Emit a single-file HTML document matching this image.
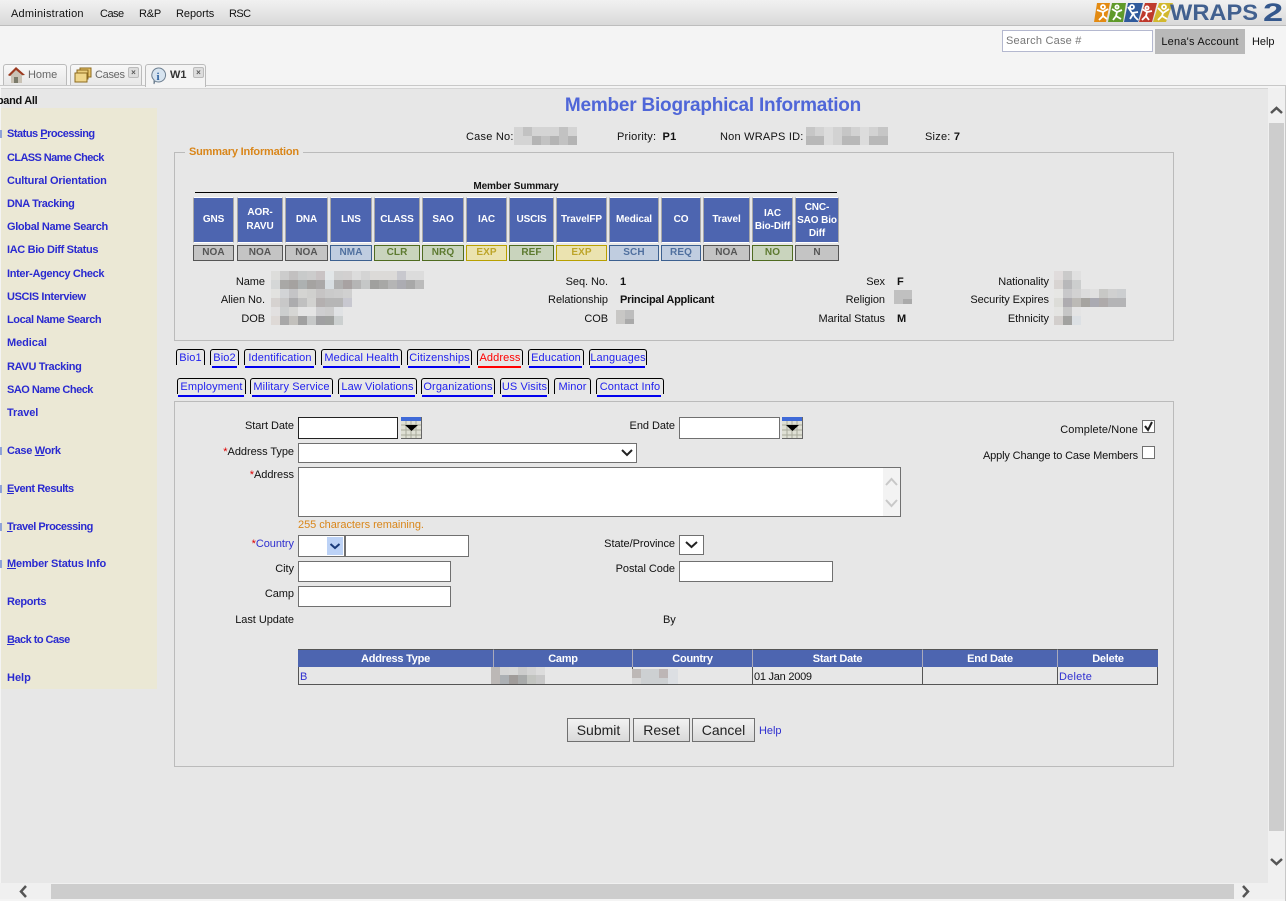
<!DOCTYPE html>
<html><head><meta charset="utf-8"><title>Member Biographical Information</title>
<style>
html,body{margin:0;padding:0;width:1286px;height:901px;overflow:hidden;background:#f4f4f4}
body{position:relative;font:11px/14px "Liberation Sans",sans-serif;color:#111;letter-spacing:-.05px}
div,span.a,svg.a,a{position:absolute}
.t{white-space:nowrap;height:16px;line-height:16px}
.p{letter-spacing:.22px}
.r{white-space:nowrap;height:16px;line-height:16px;text-align:right;width:200px}
.nav{left:7px;margin-top:1px;font-weight:bold;color:#2a2ad0;white-space:nowrap;height:16px;line-height:16px;text-decoration:none;letter-spacing:-.35px}
.h{background:#4d65b0;color:#fff;font-weight:bold;font-size:10px;line-height:14px;text-align:center;top:197px;height:46px;border-left:1px solid #a8a8a8;border-right:1px solid #a8a8a8;border-top:1px solid #fff;border-bottom:1px solid #fff;box-sizing:border-box;display:flex;align-items:center;justify-content:center;letter-spacing:-.1px;white-space:nowrap}
.s{top:245px;height:16px;box-sizing:border-box;border:1px solid #555;background:#c4c4c4;color:#555;font-weight:bold;font-size:10px;line-height:14px;text-align:center;letter-spacing:.1px}
.bl{border-color:#3c6090;background:#c0cde0;color:#50709f}
.gr{border-color:#4f6b20;background:#c9d4bd;color:#5d7a30}
.ye{border-color:#b8a000;background:#ebe3b0;color:#bda52a}
.v{font-weight:bold;letter-spacing:-.27px}
.tab{height:16px;box-sizing:border-box;border:1px solid #000;border-bottom:0;border-radius:3px 3px 0 0;color:#2222ee;text-align:center;line-height:16px;white-space:nowrap;letter-spacing:.1px}
.u{height:2px;background:#0000ee}
.in{background:#fff;border:1px solid #707070;box-sizing:border-box}
.th{top:649px;height:18px;background:#4d65b0;color:#fff;font-weight:bold;text-align:center;line-height:18px;box-sizing:border-box;border-top:1px solid #555;border-right:1px solid #aab;letter-spacing:-.25px}
.td{top:667px;height:18px;box-sizing:border-box;border-bottom:1px solid #555;border-right:1px solid #555;line-height:18px;white-space:nowrap;padding:1px 0 0 1px;letter-spacing:.22px}
.btn{top:718px;height:24px;box-sizing:border-box;border:1px solid #707070;background:linear-gradient(#f2f2f2,#d9d9d9);font-size:14px;line-height:22px;text-align:center;color:#222;letter-spacing:0}
.tb{top:64px;height:22px;box-sizing:border-box;border:1px solid #bbb;border-bottom:0;border-radius:3px 3px 0 0;background:linear-gradient(#f8f8f8,#e6e6e6);color:#666;line-height:20px}
.x{top:2px;width:9px;height:9px;background:#ddd;border:1px solid #bbb;border-radius:2px;font-size:8px;line-height:9px;text-align:center;color:#555;font-weight:bold;letter-spacing:0}
.m{left:0;width:2px;height:8px;background:#8fa2d8}
</style></head><body>

<!-- top bar -->
<div style="left:0;top:0;width:1286px;height:25px;background:linear-gradient(#f1f1f1,#d9d9d9);border-bottom:1px solid #bdbdbd"></div>
<div class="t p" style="left:11px;top:6px">Administration</div>
<div class="t" style="left:100px;top:6px;letter-spacing:-.5px">Case</div>
<div class="t" style="left:139px;top:6px;letter-spacing:-.2px">R&amp;P</div>
<div class="t" style="left:176px;top:6px">Reports</div>
<div class="t" style="left:229px;top:6px;letter-spacing:-.6px">RSC</div>

<!-- logo -->
<svg class="a" style="left:1092px;top:2px" width="194" height="22" viewBox="0 0 194 22">
<polygon points="5,1 18,1 14,20 2,20" fill="#e38a12"/>
<polygon points="20,1 34,1 31,20 16,20" fill="#5f9a2a"/>
<polygon points="36,1 51,1 46,20 32,20" fill="#2f5a9c"/>
<polygon points="53,1 65,1 60,20 47,20" fill="#bf3a2c"/>
<polygon points="67,1 81,1 74,20 61,20" fill="#d2b82e"/>
<g stroke="#fff" stroke-width="1.8" fill="none">
<circle cx="11" cy="5" r="2"/><path d="M5 8l6 2 5-3M11 10v4l-4 4M11 14l4 3"/>
<circle cx="25" cy="5" r="1.6"/><path d="M20 7l5 3 5-2M25 10l-1 4-3 4M24 14l5 3"/>
<circle cx="40" cy="5" r="2"/><path d="M36 5l4 6 6-1M41 11l2 4 3 3M41 12l-3 5"/>
<circle cx="55" cy="6" r="1.6"/><path d="M50 7l5 3 5-1M55 10l-1 4-4 4M54 14l3 4"/>
<circle cx="72" cy="5" r="2"/><path d="M66 6l5 5 6-4M71 11l-1 3-4 4M70 14l5 3"/>
</g>
<text x="78" y="18" font-family="Liberation Sans" font-weight="bold" font-size="22" fill="#41608f" textLength="88" lengthAdjust="spacingAndGlyphs" letter-spacing="0">WRAPS</text>
<text x="171" y="19" font-family="Liberation Sans" font-weight="bold" font-size="25" fill="#34578c" letter-spacing="0" transform="translate(171 0) scale(1.45 1) translate(-171 0)">2</text>
</svg>

<!-- search row -->
<div class="p" style="left:1002px;top:30px;width:151px;height:22px;box-sizing:border-box;background:#fff;border:1px solid #b4b8cf;color:#777;line-height:21px;padding-left:3px">Search Case #</div>
<div class="p" style="left:1155px;top:29px;width:90px;height:25px;background:#b9b9b9;text-align:center;line-height:26px">Lena's Account</div>
<div class="t" style="left:1252px;top:34px">Help</div>

<!-- tabs -->
<div class="tb" style="left:3px;width:64px"><span class="a" style="left:24px;top:0">Home</span>
<svg class="a" style="left:3px;top:2px" width="18" height="17"><polygon points="9,1 18,8 15,9 15,16 4,16 4,9 1,9" fill="#c9c2b5"/><polygon points="9,0 18,8 15,8 9,3 3,9 1,8" fill="#9c3a20"/><rect x="7" y="10" width="4" height="6" fill="#7a7a6a"/></svg></div>
<div class="tb" style="left:70px;width:72px"><span class="a" style="left:24px;top:0;letter-spacing:-.3px">Cases</span>
<svg class="a" style="left:3px;top:2px" width="18" height="16"><rect x="6" y="1" width="11" height="9" fill="#e8c46a" stroke="#8c6a20"/><rect x="3" y="3" width="11" height="9" fill="#eccf7e" stroke="#8c6a20"/><rect x="1" y="6" width="12" height="9" fill="#f0d68a" stroke="#8c6a20"/></svg>
<div class="x" style="left:57px">×</div></div>
<div class="tb" style="left:145px;width:61px;background:#f4f4f4;height:23px;color:#333;font-weight:bold;z-index:3"><span class="a" style="left:24px;top:0">W1</span>
<svg class="a" style="left:3px;top:2px" width="18" height="18"><path d="M9 1a7 7 0 1 1-3 13l-1 3 0-4a7 7 0 0 1 4-12z" fill="#d7e4f0" stroke="#6d7f90"/><text x="9" y="13" font-size="11" font-weight="bold" font-family="Liberation Serif" text-anchor="middle" fill="#2a5f9e">i</text></svg>
<div class="x" style="left:47px">×</div></div>
<div style="left:0;top:85px;width:1286px;height:1px;background:#c8c8c8"></div>

<!-- content -->
<div style="left:1px;top:88px;width:1267px;height:795px;background:#e7e7e7;border-top:1px solid #d4d4d4;box-sizing:border-box"></div>
<div style="left:1268px;top:88px;width:17px;height:795px;background:#f0f0f0"></div>
<div style="left:1269px;top:123px;width:15px;height:708px;background:#cdcdcd"></div>
<div style="left:0;top:883px;width:1285px;height:16px;background:#f0f0f0"></div>
<div style="left:51px;top:884px;width:1183px;height:15px;background:#cdcdcd"></div>
<div style="left:1285px;top:85px;width:1px;height:816px;background:#c8c8c8"></div>
<svg class="a" style="left:1268px;top:100px" width="17" height="20"><path d="M3 13l5.500-5 5.500 5" fill="none" stroke="#555" stroke-width="2.500"/></svg>
<svg class="a" style="left:1268px;top:852px" width="17" height="20"><path d="M3 7l5.500 5 5.500-5" fill="none" stroke="#555" stroke-width="2.500"/></svg>
<svg class="a" style="left:14px;top:884px" width="20" height="15"><path d="M12 2l-5 5.500 5 5.500" fill="none" stroke="#555" stroke-width="2.500"/></svg>
<svg class="a" style="left:1238px;top:884px" width="20" height="15"><path d="M5 2l5 5.500-5 5.500" fill="none" stroke="#555" stroke-width="2.500"/></svg>

<!-- sidebar -->
<div class="t" style="left:0;top:93px;width:60px;overflow:hidden;font-weight:bold;color:#111;letter-spacing:-.3px"><span style="margin-left:-16px">Expand All</span></div>
<div style="left:1px;top:108px;width:156px;height:581px;background:#ebe8d5"></div>
<div class="m" style="top:130px"></div><div class="m" style="top:447px"></div><div class="m" style="top:485px"></div><div class="m" style="top:523px"></div><div class="m" style="top:560px"></div>
<div class="nav" style="top:125px;letter-spacing:-.49px">Status <u>P</u>rocessing</div>
<div class="nav" style="top:149px;letter-spacing:-.6px">CLASS Name Check</div>
<div class="nav" style="top:172px;letter-spacing:-.18px">Cultural Orientation</div>
<div class="nav" style="top:195px">DNA Tracking</div>
<div class="nav" style="top:218px;letter-spacing:-.34px">Global Name Search</div>
<div class="nav" style="top:241px">IAC Bio Diff Status</div>
<div class="nav" style="top:265px;letter-spacing:-.34px">Inter-Agency Check</div>
<div class="nav" style="top:288px;letter-spacing:-.38px">USCIS Interview</div>
<div class="nav" style="top:311px;letter-spacing:-.43px">Local Name Search</div>
<div class="nav" style="top:334px;letter-spacing:-.07px">Medical</div>
<div class="nav" style="top:358px;letter-spacing:-.32px">RAVU Tracking</div>
<div class="nav" style="top:381px;letter-spacing:-.5px">SAO Name Check</div>
<div class="nav" style="top:404px;letter-spacing:-.1px">Travel</div>
<div class="nav" style="top:442px;letter-spacing:-.33px">Case <u>W</u>ork</div>
<div class="nav" style="top:480px;letter-spacing:-.47px"><u>E</u>vent Results</div>
<div class="nav" style="top:518px;letter-spacing:-.49px"><u>T</u>ravel Processing</div>
<div class="nav" style="top:555px;letter-spacing:-.17px"><u>M</u>ember Status Info</div>
<div class="nav" style="top:593px">Reports</div>
<div class="nav" style="top:631px;letter-spacing:-.53px"><u>B</u>ack to Case</div>
<div class="nav" style="top:669px;letter-spacing:0">Help</div>

<!-- title -->
<div style="left:413px;top:94px;width:600px;text-align:center;font-weight:bold;font-size:19px;line-height:23px;color:#4f66d8;letter-spacing:-.22px">Member Biographical Information</div>
<div class="t p" style="left:466px;top:129px">Case No:</div>
<svg class="a" style="left:514px;top:127px" width="63" height="18"><path fill="#d4d4d4" d="M0 0h63v18H0z"/><path fill="#c2c2c2" d="M9 0h9v9H9zM27 9h9v9h-9zM45 0h9v18h-9z"/><path fill="#b4b4b4" d="M18 9h9v9h-9zM36 9h9v9h-9zM54 9h9v9h-9z"/></svg>
<div class="t p" style="left:617px;top:129px">Priority: <b style="margin-left:3px">P1</b></div>
<div class="t p" style="left:720px;top:129px">Non WRAPS ID:</div>
<svg class="a" style="left:806px;top:127px" width="82" height="18"><path fill="#d2d2d2" d="M0 0h82v18H0z"/><path fill="#b8b8b8" d="M0 9h18v9H0zM36 9h18v9H36zM63 9h19v9H63z"/><path fill="#dcdcdc" d="M18 0h9v18h-9zM54 0h9v18h-9z"/><path fill="#c6c6c6" d="M0 0h9v9H0zM36 0h9v9h-9zM72 0h10v9H72z"/></svg>
<div class="t p" style="left:925px;top:129px">Size: <b>7</b></div>

<!-- summary -->
<div style="left:174px;top:152px;width:1000px;height:189px;box-sizing:border-box;border:1px solid #bbb"></div>
<div class="t" style="left:185px;top:144px;padding:0 4px;background:#e7e7e7;color:#d9861a;font-weight:bold;letter-spacing:-.2px">Summary Information</div>
<div class="t" style="left:416px;top:179px;width:200px;text-align:center;font-weight:bold;font-size:10px;letter-spacing:-.1px">Member Summary</div>
<div style="left:195px;top:192px;width:642px;height:1px;background:#000"></div>

<div class="h" style="left:193px;width:41px">GNS</div><div class="s" style="left:193px;width:41px">NOA</div>
<div class="h" style="left:237px;width:46px">AOR-<br>RAVU</div><div class="s" style="left:237px;width:46px">NOA</div>
<div class="h" style="left:285px;width:43px">DNA</div><div class="s" style="left:285px;width:43px">NOA</div>
<div class="h" style="left:330px;width:42px">LNS</div><div class="s bl" style="left:330px;width:42px">NMA</div>
<div class="h" style="left:374px;width:46px">CLASS</div><div class="s gr" style="left:374px;width:46px">CLR</div>
<div class="h" style="left:422px;width:42px">SAO</div><div class="s gr" style="left:422px;width:42px">NRQ</div>
<div class="h" style="left:466px;width:41px">IAC</div><div class="s ye" style="left:466px;width:41px">EXP</div>
<div class="h" style="left:509px;width:45px">USCIS</div><div class="s gr" style="left:509px;width:45px">REF</div>
<div class="h" style="left:556px;width:51px">TravelFP</div><div class="s ye" style="left:556px;width:51px">EXP</div>
<div class="h" style="left:609px;width:50px">Medical</div><div class="s bl" style="left:609px;width:50px">SCH</div>
<div class="h" style="left:661px;width:40px">CO</div><div class="s bl" style="left:661px;width:40px">REQ</div>
<div class="h" style="left:703px;width:47px">Travel</div><div class="s" style="left:703px;width:47px">NOA</div>
<div class="h" style="left:752px;width:41px;line-height:13px">IAC<br>Bio-Diff</div><div class="s gr" style="left:752px;width:41px">NO</div>
<div class="h" style="left:795px;width:44px;line-height:13px">CNC-<br>SAO Bio<br>Diff</div><div class="s" style="left:795px;width:44px">N</div>

<div class="r" style="left:65px;top:274px">Name</div>
<div class="r" style="left:65px;top:292px">Alien No.</div>
<div class="r" style="left:65px;top:311px">DOB</div>
<svg class="a" style="left:271px;top:271px" width="153" height="54" shape-rendering="crispEdges">
<rect x="0" y="0" width="9" height="9" fill="#dddddb"/><rect x="9" y="0" width="9" height="9" fill="#cccccc"/><rect x="18" y="0" width="9" height="9" fill="#c2c0c0"/><rect x="27" y="0" width="9" height="9" fill="#c8caca"/><rect x="36" y="0" width="9" height="9" fill="#cccccc"/><rect x="45" y="0" width="9" height="9" fill="#c9c3c4"/><rect x="54" y="0" width="9" height="9" fill="#e2e6e8"/><rect x="63" y="0" width="9" height="9" fill="#d0d0d0"/><rect x="72" y="0" width="9" height="9" fill="#d2d0d0"/><rect x="81" y="0" width="9" height="9" fill="#dcdcdc"/><rect x="90" y="0" width="9" height="9" fill="#d4d4d4"/><rect x="99" y="0" width="27" height="9" fill="#dcdad8"/><rect x="126" y="0" width="9" height="9" fill="#c8c8ce"/><rect x="135" y="0" width="18" height="9" fill="#dcdcdc"/>
<rect x="0" y="9" width="9" height="9" fill="#d5d7d7"/><rect x="9" y="9" width="9" height="9" fill="#a9a8a6"/><rect x="18" y="9" width="9" height="9" fill="#a5a2a0"/><rect x="27" y="9" width="9" height="9" fill="#adb1b1"/><rect x="36" y="9" width="9" height="9" fill="#a5a3a1"/><rect x="45" y="9" width="9" height="9" fill="#aaa8a8"/><rect x="54" y="9" width="9" height="9" fill="#d8dee2"/><rect x="63" y="9" width="9" height="9" fill="#b0b0b0"/><rect x="72" y="9" width="9" height="9" fill="#a8a2a2"/><rect x="81" y="9" width="9" height="9" fill="#b5b5b5"/><rect x="90" y="9" width="9" height="9" fill="#c5c7c7"/><rect x="99" y="9" width="9" height="9" fill="#a0a09e"/><rect x="108" y="9" width="9" height="9" fill="#a8a8a6"/><rect x="117" y="9" width="9" height="9" fill="#b5b5b5"/><rect x="126" y="9" width="9" height="9" fill="#acacb2"/><rect x="135" y="9" width="9" height="9" fill="#a8a8a8"/><rect x="144" y="9" width="9" height="9" fill="#bbbbbb"/>
<rect x="0" y="18" width="9" height="9" fill="#e2e2e0"/><rect x="9" y="18" width="9" height="9" fill="#d2d4d6"/><rect x="18" y="18" width="9" height="9" fill="#c4c4c6"/><rect x="27" y="18" width="9" height="9" fill="#d4d4d2"/><rect x="36" y="18" width="9" height="9" fill="#d0d0ce"/><rect x="45" y="18" width="9" height="9" fill="#c6c4c4"/><rect x="54" y="18" width="9" height="9" fill="#cacaca"/><rect x="63" y="18" width="9" height="9" fill="#cccccc"/><rect x="72" y="18" width="9" height="9" fill="#d0d0d0"/>
<rect x="0" y="27" width="9" height="9" fill="#d6d2d0"/><rect x="9" y="27" width="9" height="9" fill="#c8c8c8"/><rect x="18" y="27" width="9" height="9" fill="#acacae"/><rect x="27" y="27" width="9" height="9" fill="#c0c0c0"/><rect x="36" y="27" width="9" height="9" fill="#d2d2d0"/><rect x="45" y="27" width="9" height="9" fill="#b4b0b0"/><rect x="54" y="27" width="18" height="9" fill="#b6b6b6"/><rect x="72" y="27" width="9" height="9" fill="#c8c8d0"/>
<rect x="0" y="36" width="9" height="9" fill="#e2e0e0"/><rect x="9" y="36" width="9" height="9" fill="#cccece"/><rect x="18" y="36" width="9" height="9" fill="#d6d6d4"/><rect x="27" y="36" width="18" height="9" fill="#e4e4e4"/><rect x="45" y="36" width="9" height="9" fill="#ceced0"/><rect x="54" y="36" width="9" height="9" fill="#cccccc"/><rect x="63" y="36" width="9" height="9" fill="#e0e2e4"/>
<rect x="0" y="45" width="9" height="9" fill="#ded9d6"/><rect x="9" y="45" width="9" height="9" fill="#a8a8a8"/><rect x="18" y="45" width="9" height="9" fill="#c2c0bc"/><rect x="27" y="45" width="9" height="9" fill="#a0a0a0"/><rect x="36" y="45" width="9" height="9" fill="#c6c8c8"/><rect x="45" y="45" width="9" height="9" fill="#a0a0a2"/><rect x="54" y="45" width="9" height="9" fill="#a0a2a0"/><rect x="63" y="45" width="9" height="9" fill="#ccd0d0"/>
</svg>

<div class="r" style="left:408px;top:274px">Seq. No.</div><div class="t v" style="left:620px;top:274px">1</div>
<div class="r" style="left:408px;top:292px">Relationship</div><div class="t v" style="left:620px;top:292px">Principal Applicant</div>
<div class="r" style="left:408px;top:311px">COB</div>
<svg class="a" style="left:616px;top:310px" width="18" height="14"><rect width="18" height="14" fill="#c8c7c5"/><rect x="9" width="9" height="9" fill="#bdbdbd"/><rect x="9" y="9" width="9" height="5" fill="#aaa"/></svg>

<div class="r" style="left:685px;top:274px">Sex</div><div class="t v" style="left:897px;top:274px">F</div>
<div class="r" style="left:685px;top:292px">Religion</div>
<svg class="a" style="left:894px;top:290px" width="18" height="14"><rect width="18" height="14" fill="#c0c0c0"/><rect x="9" y="9" width="9" height="5" fill="#aaa"/></svg>
<div class="r" style="left:685px;top:311px">Marital Status</div><div class="t v" style="left:897px;top:311px">M</div>

<div class="r" style="left:849px;top:274px">Nationality</div>
<div class="r" style="left:849px;top:292px">Security Expires</div>
<div class="r" style="left:849px;top:311px">Ethnicity</div>
<svg class="a" style="left:1054px;top:271px" width="73" height="54" shape-rendering="crispEdges">
<rect x="0" y="0" width="9" height="9" fill="#e0dcdc"/><rect x="9" y="0" width="9" height="9" fill="#cacaca"/><rect x="18" y="0" width="9" height="9" fill="#e0e0e0"/>
<rect x="0" y="9" width="9" height="9" fill="#d8d4d2"/><rect x="9" y="9" width="9" height="9" fill="#b8b8ba"/><rect x="18" y="9" width="9" height="9" fill="#cccece"/>
<rect x="0" y="18" width="9" height="9" fill="#e6e6e4"/><rect x="9" y="18" width="9" height="9" fill="#c8c8ca"/><rect x="18" y="18" width="9" height="9" fill="#d2d2d2"/><rect x="27" y="18" width="9" height="9" fill="#dcdcdc"/><rect x="36" y="18" width="9" height="9" fill="#e0e0e0"/><rect x="45" y="18" width="9" height="9" fill="#c8c8c6"/><rect x="54" y="18" width="9" height="9" fill="#d0d0d0"/><rect x="63" y="18" width="9" height="9" fill="#ccced0"/>
<rect x="0" y="27" width="9" height="9" fill="#dcdcd8"/><rect x="9" y="27" width="9" height="9" fill="#aeacb0"/><rect x="18" y="27" width="9" height="9" fill="#bcbab6"/><rect x="27" y="27" width="9" height="9" fill="#a6a4a0"/><rect x="36" y="27" width="9" height="9" fill="#aaaab2"/><rect x="45" y="27" width="9" height="9" fill="#aeaaaa"/><rect x="54" y="27" width="18" height="9" fill="#b4b4b6"/>
<rect x="0" y="36" width="9" height="9" fill="#e4e4e2"/><rect x="9" y="36" width="9" height="9" fill="#c6c6c6"/><rect x="18" y="36" width="9" height="9" fill="#e4e4e4"/>
<rect x="0" y="45" width="9" height="9" fill="#d2cecc"/><rect x="9" y="45" width="9" height="9" fill="#a2a2a0"/><rect x="18" y="45" width="9" height="9" fill="#dce0e4"/>
</svg>

<!-- sub tabs -->
<div class="tab" style="left:176px;top:349px;width:29px">Bio1</div>
<div class="tab" style="left:210px;top:349px;width:29px">Bio2</div><div class="u" style="left:212px;top:366px;width:25px"></div>
<div class="tab" style="left:244px;top:349px;width:72px">Identification</div><div class="u" style="left:245px;top:366px;width:69px"></div>
<div class="tab" style="left:321px;top:349px;width:81px">Medical Health</div><div class="u" style="left:323px;top:366px;width:77px"></div>
<div class="tab" style="left:407px;top:349px;width:65px">Citizenships</div><div class="u" style="left:408px;top:366px;width:62px"></div>
<div class="tab" style="left:477px;top:349px;width:46px;color:#f00">Address</div><div class="u" style="left:478px;top:366px;width:43px;background:#f00"></div>
<div class="tab" style="left:528px;top:349px;width:56px">Education</div><div class="u" style="left:529px;top:366px;width:53px"></div>
<div class="tab" style="left:589px;top:349px;width:58px">Languages</div><div class="u" style="left:590px;top:366px;width:55px"></div>

<div class="tab" style="left:177px;top:378px;width:69px">Employment</div><div class="u" style="left:178px;top:395px;width:66px"></div>
<div class="tab" style="left:250px;top:378px;width:83px">Military Service</div><div class="u" style="left:252px;top:395px;width:79px"></div>
<div class="tab" style="left:338px;top:378px;width:79px">Law Violations</div><div class="u" style="left:340px;top:395px;width:75px"></div>
<div class="tab" style="left:421px;top:378px;width:74px">Organizations</div><div class="u" style="left:422px;top:395px;width:71px"></div>
<div class="tab" style="left:500px;top:378px;width:49px">US Visits</div><div class="u" style="left:502px;top:395px;width:45px"></div>
<div class="tab" style="left:554px;top:378px;width:37px">Minor</div>
<div class="tab" style="left:596px;top:378px;width:68px">Contact Info</div><div class="u" style="left:597px;top:395px;width:64px"></div>

<!-- form panel -->
<div style="left:174px;top:401px;width:1000px;height:366px;box-sizing:border-box;border:1px solid #bbb"></div>
<div class="r" style="left:94px;top:418px">Start Date</div>
<div class="in" style="left:298px;top:417px;width:100px;height:22px;border-color:#222"></div>
<svg class="a" style="left:401px;top:417px" width="21" height="22"><rect width="21" height="22" fill="#dfe0d5"/><path d="M0 8h21M0 13h21M0 18h21M5 3v19M10 3v19M15 3v19" stroke="#a9aa9c"/><rect width="21" height="4" fill="#3f6ad8"/><path d="M4 8h13l-6.500 6z" fill="#000"/><path d="M20.500 0v22M0 21.500h21" stroke="#666"/></svg>
<div class="r" style="left:475px;top:418px">End Date</div>
<div class="in" style="left:679px;top:417px;width:101px;height:22px"></div>
<svg class="a" style="left:782px;top:417px" width="21" height="22"><rect width="21" height="22" fill="#dfe0d5"/><path d="M0 8h21M0 13h21M0 18h21M5 3v19M10 3v19M15 3v19" stroke="#a9aa9c"/><rect width="21" height="4" fill="#3f6ad8"/><path d="M4 8h13l-6.500 6z" fill="#000"/><path d="M20.500 0v22M0 21.500h21" stroke="#666"/></svg>

<div class="r" style="left:938px;top:422px;letter-spacing:.1px">Complete/None</div>
<div style="left:1142px;top:420px;width:13px;height:13px;box-sizing:border-box;background:#fff;border:1px solid #707070"></div>
<svg class="a" style="left:1142px;top:420px" width="13" height="13"><path d="M3 6l3 4 4-8" fill="none" stroke="#222" stroke-width="2"/></svg>
<div class="r" style="left:938px;top:448px;letter-spacing:-.14px">Apply Change to Case Members</div>
<div style="left:1142px;top:446px;width:13px;height:13px;box-sizing:border-box;background:#fff;border:1px solid #707070"></div>

<div class="r" style="left:94px;top:444px"><span style="color:#d00">*</span>Address Type</div>
<div class="in" style="left:298px;top:443px;width:339px;height:20px"></div>
<svg class="a" style="left:620px;top:446px" width="14" height="14"><path d="M2 4l5 5 5-5" fill="none" stroke="#222" stroke-width="2"/></svg>
<div class="r" style="left:94px;top:467px"><span style="color:#d00">*</span>Address</div>
<div class="in" style="left:298px;top:467px;width:603px;height:50px"></div>
<div style="left:883px;top:468px;width:17px;height:48px;background:#f3f3f3"></div>
<svg class="a" style="left:883px;top:470px" width="17" height="46"><path d="M3 15l5.500-6 5.500 6M3 30l5.500 6 5.500-6" fill="none" stroke="#c8c8c8" stroke-width="2"/></svg>
<div class="t" style="left:298px;top:517px;color:#d9861a">255 characters remaining.</div>

<div class="r" style="left:94px;top:536px"><span style="color:#d00">*</span><span style="color:#3030d0">Country</span></div>
<div class="in" style="left:298px;top:535px;width:47px;height:22px"></div>
<div style="left:327px;top:537px;width:16px;height:18px;background:#bcd2f6"></div>
<svg class="a" style="left:327px;top:540px" width="16" height="12"><path d="M3.500 4l4.500 4 4.500-4" fill="none" stroke="#1a3a7a" stroke-width="2"/></svg>
<div class="in" style="left:345px;top:535px;width:124px;height:22px"></div>
<div class="r" style="left:475px;top:536px">State/Province</div>
<div class="in" style="left:679px;top:535px;width:25px;height:20px"></div>
<svg class="a" style="left:684px;top:538px" width="16" height="14"><path d="M2 4l5.500 5 5.500-5" fill="none" stroke="#222" stroke-width="2"/></svg>
<div class="r" style="left:94px;top:561px">City</div>
<div class="in" style="left:298px;top:561px;width:153px;height:21px"></div>
<div class="r" style="left:475px;top:561px">Postal Code</div>
<div class="in" style="left:679px;top:561px;width:154px;height:21px"></div>
<div class="r" style="left:94px;top:586px">Camp</div>
<div class="in" style="left:298px;top:586px;width:153px;height:21px"></div>
<div class="r" style="left:94px;top:612px">Last Update</div>
<div class="t" style="left:663px;top:612px">By</div>

<!-- table -->
<div class="th" style="left:298px;width:196px">Address Type</div>
<div class="th" style="left:494px;width:139px">Camp</div>
<div class="th" style="left:633px;width:120px">Country</div>
<div class="th" style="left:753px;width:170px">Start Date</div>
<div class="th" style="left:923px;width:135px">End Date</div>
<div class="th" style="left:1058px;width:100px;border-right:0">Delete</div>
<div class="td" style="left:298px;width:196px;border-left:1px solid #555;color:#3030d0">B</div>
<div class="td" style="left:494px;width:139px"></div>
<div class="td" style="left:633px;width:120px"></div>
<div class="td" style="left:753px;width:170px;letter-spacing:-.25px">01 Jan 2009</div>
<div class="td" style="left:923px;width:135px"></div>
<div class="td" style="left:1058px;width:100px;color:#3030d0">Delete</div>
<svg class="a" style="left:491px;top:667px" width="54" height="17" shape-rendering="crispEdges"><rect width="9" height="17" fill="#bcb8b6"/><rect x="9" width="9" height="8" fill="#d6d6d6"/><rect x="18" width="9" height="8" fill="#d8d8d8"/><rect x="27" width="9" height="8" fill="#cccccc"/><rect x="36" width="9" height="8" fill="#d4d4d4"/><rect x="45" width="9" height="8" fill="#dcdcdc"/><rect x="9" y="8" width="9" height="9" fill="#acb0b4"/><rect x="18" y="8" width="9" height="9" fill="#a09c9a"/><rect x="27" y="8" width="9" height="9" fill="#a8aaaa"/><rect x="36" y="8" width="9" height="9" fill="#c2c4c0"/><rect x="45" y="8" width="9" height="9" fill="#c8c8c8"/></svg>
<svg class="a" style="left:632px;top:669px" width="46" height="15" shape-rendering="crispEdges"><rect width="46" height="15" fill="#cdd0d2"/><rect width="9" height="9" fill="#bdb8b6"/><rect y="9" width="9" height="6" fill="#d8d8d8"/><rect x="27" width="9" height="9" fill="#bdb6b6"/><rect x="36" width="10" height="15" fill="#dcdfe3"/></svg>

<div class="btn" style="left:567px;width:63px">Submit</div>
<div class="btn" style="left:633px;width:57px">Reset</div>
<div class="btn" style="left:692px;width:63px">Cancel</div>
<div class="t" style="left:759px;top:723px;color:#3030d0">Help</div>

</body></html>
